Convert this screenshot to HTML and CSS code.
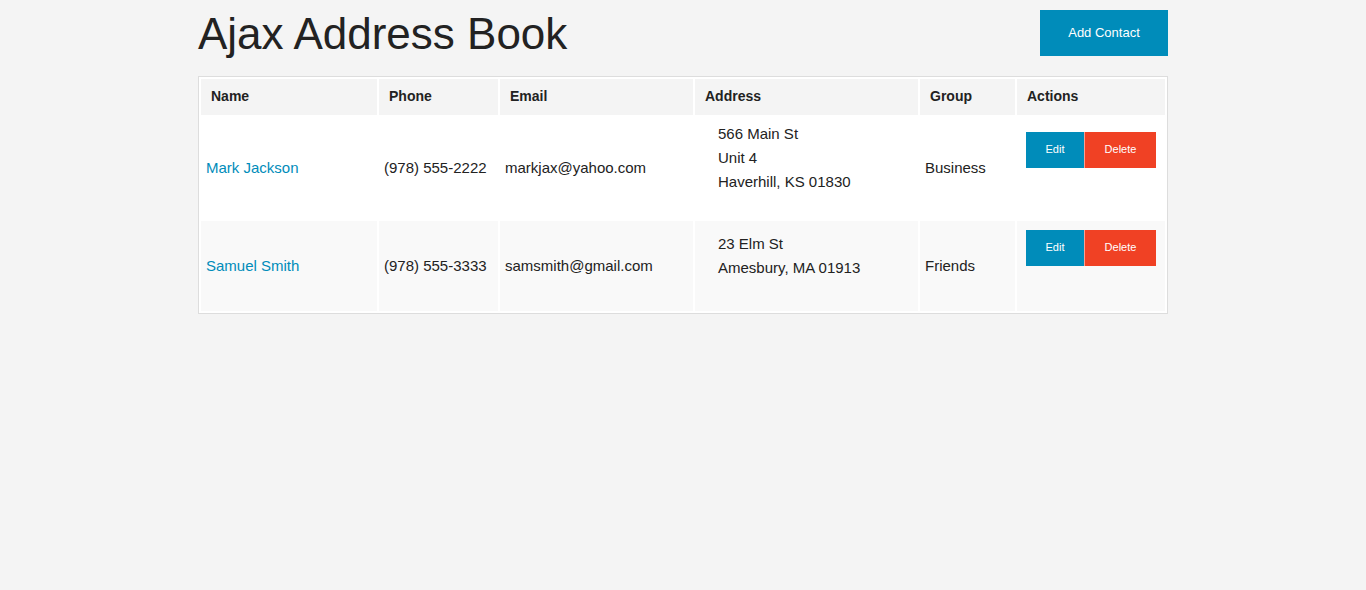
FILE: index.html
```html
<!DOCTYPE html>
<html>
<head>
<meta charset="utf-8">
<title>Ajax Address Book</title>
<link rel="stylesheet" href="styles.css">
</head>
<body>
<div class="container">
  <header class="top">
    <h1 class="title">Ajax Address Book</h1>
    <a class="btn btn-add" href="#">Add Contact</a>
  </header>
  <table class="contacts">
    <colgroup>
      <col class="c-name"><col class="c-phone"><col class="c-email"><col class="c-address"><col class="c-group"><col class="c-actions">
    </colgroup>
    <thead>
      <tr><th>Name</th><th>Phone</th><th>Email</th><th>Address</th><th>Group</th><th>Actions</th></tr>
    </thead>
    <tbody>
      <tr>
        <td><a class="name-link" href="#">Mark Jackson</a></td>
        <td>(978) 555-2222</td>
        <td>markjax@yahoo.com</td>
        <td><ul class="addr"><li>566 Main St</li><li>Unit 4</li><li>Haverhill, KS 01830</li></ul></td>
        <td>Business</td>
        <td class="actions"><div class="btn-group"><a class="btn btn-edit" href="#">Edit</a><a class="btn btn-delete" href="#">Delete</a></div></td>
      </tr>
      <tr class="even">
        <td><a class="name-link" href="#">Samuel Smith</a></td>
        <td>(978) 555-3333</td>
        <td>samsmith@gmail.com</td>
        <td><ul class="addr"><li>23 Elm St</li><li>Amesbury, MA 01913</li></ul></td>
        <td>Friends</td>
        <td class="actions"><div class="btn-group"><a class="btn btn-edit" href="#">Edit</a><a class="btn btn-delete" href="#">Delete</a></div></td>
      </tr>
    </tbody>
  </table>
</div>
</body>
</html>
```
FILE: styles.css
```css
html, body {
  margin: 0;
  padding: 0;
  background: #f4f4f4;
  font-family: "Liberation Sans", Arial, Helvetica, sans-serif;
  color: #222;
}
.container {
  width: 970px;
  margin: 0 auto;
}
.top {
  display: flex;
  justify-content: space-between;
  align-items: flex-start;
  height: 76px;
}
.title {
  margin: 7px 0 0 0;
  font-size: 44px;
  font-weight: normal;
  line-height: 54px;
  color: #222;
}
.btn {
  display: inline-block;
  text-decoration: none;
  color: #fff;
  text-align: center;
  font-family: "Liberation Sans", Arial, sans-serif;
}
.btn-add {
  margin-top: 10px;
  width: 128px;
  height: 46px;
  line-height: 46px;
  font-size: 13px;
  background: #008cba;
}
.contacts {
  width: 970px;
  table-layout: fixed;
  border: 1px solid #ddd;
  border-spacing: 2px;
  background: #fff;
}
.c-name { width: 176px; }
.c-phone { width: 119px; }
.c-email { width: 193px; }
.c-address { width: 223px; }
.c-group { width: 95px; }
.c-actions { width: 148px; }
.contacts th {
  background: #f4f4f4;
  font-size: 14px;
  font-weight: bold;
  text-align: left;
  height: 36px;
  padding: 0 10px 2px;
  box-sizing: border-box;
  color: #222;
}
.contacts td {
  font-size: 15px;
  padding: 4px 5px 6px;
  vertical-align: middle;
  color: #222;
}
.contacts td.actions {
  padding: 5px 6px;
}
.contacts tr.even td {
  background: #f9f9f9;
}
.name-link {
  color: #008cba;
  text-decoration: none;
}
.addr {
  list-style: none;
  margin: 1px 0 19px 0;
  padding: 0 0 0 18px;
  line-height: 24px;
}
.actions .btn-group {
  display: flex;
  margin: 4px 0 40px 3px;
}
.btn-edit, .btn-delete {
  height: 36px;
  line-height: 34px;
  font-size: 11px;
}
.btn-edit {
  width: 58px;
  background: #008cba;
}
.btn-delete {
  width: 71px;
  background: #f04124;
  border-left: 1px solid rgba(255, 255, 255, 0.5);
}
```
